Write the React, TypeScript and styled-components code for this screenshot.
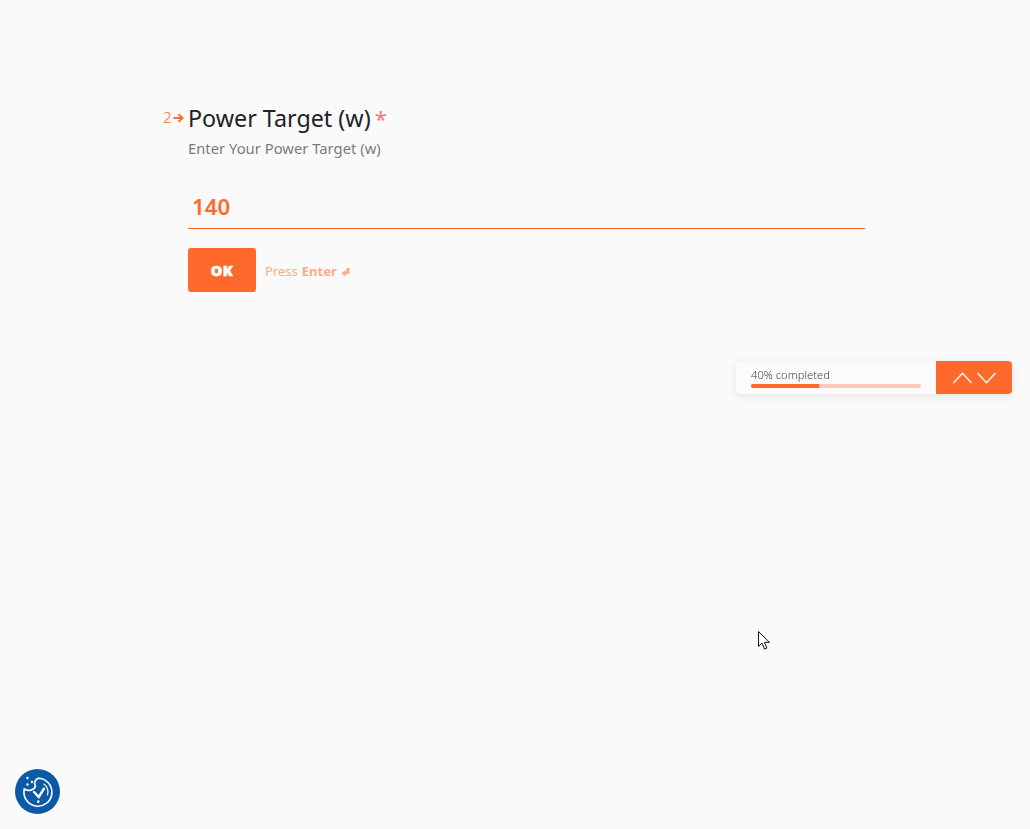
import { createGlobalStyle } from 'styled-components'
import styled from 'styled-components'

const GlobalStyle = createGlobalStyle`
  html, body {
    margin: 0;
    height: 100%;
    background: #fafafa;
    font-family: "Noto Sans", "Open Sans", sans-serif;
  }
  * {
    box-sizing: border-box;
  }
`

const Page = styled.div`
  height: 829px;
  overflow: hidden;
  padding: 101px 0 0 163px;
`

const Question = styled.div`
  display: flex;
  width: 702px;
`

const Marker = styled.div`
  display: flex;
  align-items: center;
  width: 25px;
  height: 32px;
  color: #ff6a2c;
  font-size: 15px;
  font-weight: 300;
  svg {
    margin-left: 1px;
    margin-top: 1px;
  }
`

const Body = styled.div`
  flex: 1;
`

const Title = styled.h2`
  margin: 0;
  font-size: 23.3px;
  line-height: 34px;
  font-weight: 400;
  color: #222;
`

const Star = styled.span`
  margin-left: 4px;
  font-size: 22px;
  color: #f9737f;
`

const Hint = styled.p`
  margin: 1px 0 0;
  font-size: 14.8px;
  line-height: 24px;
  color: #7a7a7a;
`

const Answer = styled.div`
  margin-top: 24px;
  height: 45px;
  padding-left: 4px;
  border-bottom: 1px solid #ff5f1f;
  font-size: 22.2px;
  line-height: 46px;
  font-weight: 600;
  color: #ff6a2c;
`

const Actions = styled.div`
  display: flex;
  align-items: center;
  gap: 9px;
  margin-top: 19px;
`

const OkButton = styled.button`
  width: 68px;
  height: 44px;
  border: none;
  border-radius: 3px;
  background: #ff6a2c;
  color: #fff;
  font-family: "Noto Sans", sans-serif;
  font-size: 14.5px;
  font-weight: 900;
  letter-spacing: 0.6px;
  -webkit-text-stroke: 0.6px #fff;
`

const PressHint = styled.span`
  display: flex;
  align-items: center;
  padding-top: 1px;
  font-size: 13px;
  color: #ffa98a;
  b {
    margin-left: 4px;
    font-weight: 700;
  }
  svg {
    margin-left: 4px;
    margin-top: 3px;
  }
`

const ProgressDock = styled.div`
  position: fixed;
  left: 736px;
  top: 361px;
  width: 276px;
  height: 33px;
  display: flex;
  border-radius: 4px;
  overflow: hidden;
  background: #fbfbfb;
  box-shadow: 0 2px 10px rgba(0, 0, 0, 0.09);
`

const ProgressInfo = styled.div`
  width: 200px;
  padding: 7px 15px 0;
`

const ProgressLabel = styled.div`
  font-size: 11.2px;
  line-height: 14px;
  font-weight: 300;
  color: #444;
`

const Track = styled.div`
  height: 4px;
  margin-top: 2px;
  border-radius: 2px;
  background: #ffcbb8;
  overflow: hidden;
`

const Fill = styled.div`
  height: 100%;
  background: #ff6a2c;
`

const NavButtons = styled.div`
  flex: 1;
  display: flex;
  align-items: center;
  justify-content: center;
  gap: 5px;
  background: #ff6a2c;
`

const CookieBadge = styled.div`
  position: fixed;
  left: 15px;
  top: 769px;
  width: 45px;
  height: 45px;
  border-radius: 50%;
  background: #0b5aa8;
  display: flex;
  align-items: center;
  justify-content: center;
`

const Cursor = styled.svg`
  position: fixed;
  left: 757px;
  top: 630px;
`

export default function App() {
  const progress = 40

  return (
    <>
      <GlobalStyle />
      <Page>
        <Question>
          <Marker>
            2
            <svg width="11" height="10" viewBox="0 0 11 10" fill="none" stroke="#ff6a2c" strokeWidth="2">
              <path d="M0.5 5h9M5.5 1.2 9.5 5 5.5 8.8" />
            </svg>
          </Marker>
          <Body>
            <Title>
              Power Target (w)<Star>*</Star>
            </Title>
            <Hint>Enter Your Power Target (w)</Hint>
            <Answer>140</Answer>
            <Actions>
              <OkButton>OK</OkButton>
              <PressHint>
                Press <b>Enter</b>
                <svg width="9" height="10" viewBox="0 0 9 10" fill="#ffa98a">
                  <path d="M5.5 1H8.5V7H4.5V9.5L0.5 6.5 4.5 3V4.8H5.5z" />
                </svg>
              </PressHint>
            </Actions>
          </Body>
        </Question>
      </Page>

      <ProgressDock>
        <ProgressInfo>
          <ProgressLabel>{progress}% completed</ProgressLabel>
          <Track>
            <Fill style={{ width: `${progress}%` }} />
          </Track>
        </ProgressInfo>
        <NavButtons>
          <svg width="19" height="12" viewBox="0 0 19 12" fill="none" stroke="#fff" strokeWidth="1.3">
            <path d="M0.5 11 9.5 1.2l9 9.8" />
          </svg>
          <svg width="19" height="12" viewBox="0 0 19 12" fill="none" stroke="#fff" strokeWidth="1.3">
            <path d="M0.5 1 9.5 10.8l9-9.8" />
          </svg>
        </NavButtons>
      </ProgressDock>

      <CookieBadge>
        <svg width="32" height="32" viewBox="0 0 32 32" fill="none" stroke="#fff" strokeWidth="1.6" strokeLinecap="round">
          <path d="M16 2.2A14 14 0 1 1 2.3 13C6 15.5 12.5 14.5 13.5 10 11.5 7 13 4 16 2.2z" />
          <path d="M22 8A10.5 10.5 0 0 1 25.5 19" strokeWidth="1.1" />
          <path d="M12 16l4.7 5 5.3-8.3" strokeWidth="2.4" />
          <path d="M16.3 25.5v.2" strokeWidth="2.6" />
          <path d="M5.5 2v.1M10 6v.1M5.5 8.5v.1" strokeWidth="2.4" />
        </svg>
      </CookieBadge>

      <Cursor width="14" height="21" viewBox="0 0 14 21">
        <path d="M1.5 1.5v15l3.6-3.4 2.4 6 2.4-1-2.4-5.8h5z" fill="#fff" stroke="#111" strokeWidth="1" />
      </Cursor>
    </>
  )
}
